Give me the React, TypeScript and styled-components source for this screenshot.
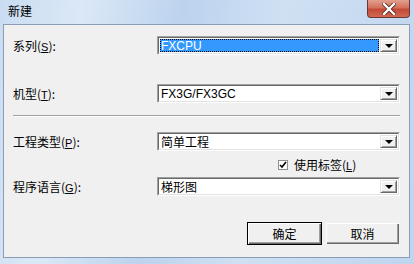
import React from "react";
import styled, { createGlobalStyle } from "styled-components";

const GlobalStyle = createGlobalStyle`
  html, body {
    margin: 0;
    padding: 0;
    background: #ffffff;
  }
  body {
    font-family: "Liberation Sans", "Noto Sans CJK SC", sans-serif;
    font-size: 12px;
  }
`;

const Window = styled.div`
  width: 414px;
  height: 264px;
  display: flex;
  flex-direction: column;
  box-sizing: border-box;
  background: linear-gradient(
    100deg,
    #c9dcf1 0%,
    #dbe8f6 18%,
    #bcd3ee 40%,
    #cfe0f3 62%,
    #bfd5ef 100%
  );
  overflow: hidden;
`;

const TitleBar = styled.div`
  height: 24px;
  display: flex;
  align-items: flex-start;
  justify-content: space-between;
  padding-left: 8px;
  box-sizing: border-box;
`;

const Title = styled.span`
  font-family: "Noto Sans CJK SC", sans-serif;
  font-size: 12px;
  line-height: 12px;
  margin-top: 5px;
  color: #000;
`;

const CloseButton = styled.div`
  width: 43px;
  height: 18px;
  margin-right: 4px;
  border: 1px solid #6d3631;
  border-top: none;
  border-radius: 0 0 4px 4px;
  box-sizing: border-box;
  background: linear-gradient(180deg, #e2a08f 0%, #d4715d 45%, #c24a36 55%, #d06a55 100%);
  display: flex;
  align-items: center;
  justify-content: center;
`;

const Client = styled.div`
  flex: 1;
  margin: 0 4px 6px 3px;
  border: 1px solid #8a9db6;
  background: #f0f0f0;
  display: flex;
  flex-direction: column;
  padding: 11px 9px 0 9px;
  box-sizing: border-box;
`;

const Row = styled.div<{ $top: number }>`
  display: flex;
  align-items: center;
  margin-top: ${(p) => p.$top}px;
`;

const Label = styled.div`
  width: 144px;
  font-family: "Noto Sans CJK SC", sans-serif;
  font-size: 12px;
  color: #000;
`;

const Hot = styled.span`
  text-decoration: underline;
  font-family: "Liberation Sans", sans-serif;
  font-size: 11px;
`;

const Combo = styled.div`
  flex: 1;
  height: 19px;
  box-sizing: border-box;
  border-top: 1px solid #a0a0a0;
  border-left: 1px solid #a0a0a0;
  border-right: 1px solid #ffffff;
  border-bottom: 1px solid #ffffff;
  display: flex;
`;

const ComboInner = styled.div`
  flex: 1;
  display: flex;
  border-top: 1px solid #696969;
  border-left: 1px solid #696969;
  border-right: 1px solid #e3e3e3;
  border-bottom: 1px solid #e3e3e3;
  background: #fff;
  padding: 1px;
`;

const ComboText = styled.div<{ $selected?: boolean; $cjk?: boolean }>`
  flex: 1;
  display: flex;
  align-items: center;
  padding-left: 1px;
  font-family: ${(p) =>
    p.$cjk ? `"Noto Sans CJK SC", sans-serif` : `"Liberation Sans", sans-serif`};
  font-size: 12px;
  color: ${(p) => (p.$selected ? "#ffffff" : "#000000")};
  background: ${(p) => (p.$selected ? "#3399ff" : "transparent")};
  outline: ${(p) => (p.$selected ? "1px dotted #000" : "none")};
  outline-offset: -1px;
  margin-right: 1px;
`;

const DropButton = styled.div`
  width: 17px;
  box-sizing: border-box;
  background: #f0f0f0;
  border-top: 1px solid #e3e3e3;
  border-left: 1px solid #e3e3e3;
  border-right: 1px solid #696969;
  border-bottom: 1px solid #696969;
  box-shadow: inset 1px 1px 0 #fff, inset -1px -1px 0 #a0a0a0;
  display: flex;
  align-items: center;
  justify-content: center;
`;

const Arrow = styled.div`
  width: 0;
  height: 0;
  border-left: 4px solid transparent;
  border-right: 4px solid transparent;
  border-top: 4px solid #000;
  margin-top: 1px;
`;

const Separator = styled.div`
  height: 1px;
  margin-top: 12px;
  background: #a0a0a0;
  border-bottom: 1px solid #ffffff;
`;

const CheckRow = styled.label`
  display: flex;
  align-items: center;
  margin-top: 4px;
  margin-left: 265px;
  font-family: "Noto Sans CJK SC", sans-serif;
  font-size: 12px;
  gap: 6px;
  height: 19px;
`;

const CheckBox = styled.span`
  width: 10px;
  height: 10px;
  box-sizing: border-box;
  border: 1px solid #8f8f8f;
  background: #fff;
  display: flex;
  align-items: center;
  justify-content: center;
`;

const Buttons = styled.div`
  display: flex;
  justify-content: flex-end;
  gap: 3px;
  margin-top: 26px;
`;

const Button = styled.div<{ $default?: boolean }>`
  width: 75px;
  height: 23px;
  box-sizing: border-box;
  background: #f0f0f0;
  border: 1px solid ${(p) => (p.$default ? "#000" : "#f0f0f0")};
  box-shadow: inset 1px 1px 0 #fff, inset -1px -1px 0 #696969,
    inset -2px -2px 0 #a0a0a0;
  display: flex;
  align-items: center;
  justify-content: center;
  font-family: "Noto Sans CJK SC", sans-serif;
  font-size: 12px;
  color: #000;
`;

const combos = [
  { label: "系列", key: "S", value: "FXCPU", selected: true, top: 0 },
  { label: "机型", key: "T", value: "FX3G/FX3GC", top: 29 },
];

export default function App() {
  return (
    <>
      <GlobalStyle />
      <Window>
        <TitleBar>
          <Title>新建</Title>
          <CloseButton>
            <svg width="14" height="12" viewBox="0 0 14 12">
              <path
                d="M2 1 L12 11 M12 1 L2 11"
                stroke="#5a2620"
                strokeWidth="4"
                strokeLinecap="square"
              />
              <path
                d="M2 1 L12 11 M12 1 L2 11"
                stroke="#ffffff"
                strokeWidth="2.4"
                strokeLinecap="square"
              />
            </svg>
          </CloseButton>
        </TitleBar>
        <Client>
          {combos.map((c) => (
            <Row key={c.key} $top={c.top}>
              <Label>
                {c.label}(<Hot>{c.key}</Hot>):
              </Label>
              <Combo>
                <ComboInner>
                  <ComboText $selected={c.selected}>{c.value}</ComboText>
                  <DropButton>
                    <Arrow />
                  </DropButton>
                </ComboInner>
              </Combo>
            </Row>
          ))}
          <Separator />
          <Row $top={15}>
            <Label>
              工程类型(<Hot>P</Hot>):
            </Label>
            <Combo>
              <ComboInner>
                <ComboText $cjk>简单工程</ComboText>
                <DropButton>
                  <Arrow />
                </DropButton>
              </ComboInner>
            </Combo>
          </Row>
          <CheckRow>
            <CheckBox>
              <svg width="8" height="8" viewBox="0 0 8 8">
                <path d="M1 4 L3 6 L7 1" stroke="#000" strokeWidth="1.6" fill="none" />
              </svg>
            </CheckBox>
            <span>
              使用标签(<Hot>L</Hot>)
            </span>
          </CheckRow>
          <Row $top={3}>
            <Label>
              程序语言(<Hot>G</Hot>):
            </Label>
            <Combo>
              <ComboInner>
                <ComboText $cjk>梯形图</ComboText>
                <DropButton>
                  <Arrow />
                </DropButton>
              </ComboInner>
            </Combo>
          </Row>
          <Buttons>
            <Button $default>确定</Button>
            <Button>取消</Button>
          </Buttons>
        </Client>
      </Window>
    </>
  );
}
